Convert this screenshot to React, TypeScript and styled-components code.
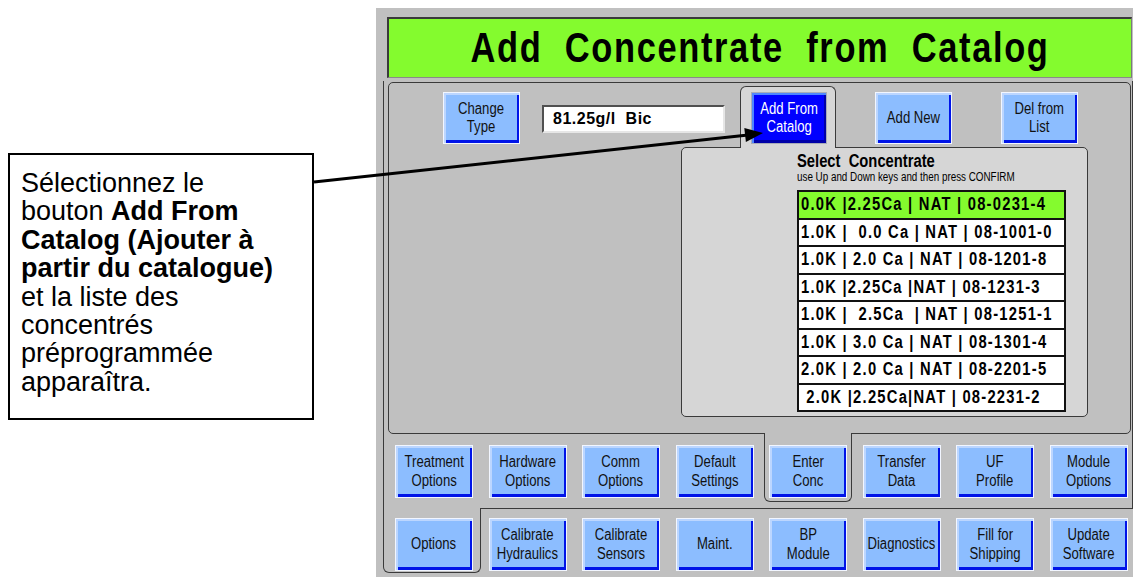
import React from "react";
import styled, { createGlobalStyle } from "styled-components";

// The panel uses a narrow sans; no narrow face is installed, so Arial metrics are squeezed.
const PANEL_FONT = `"Liberation Sans", Arial, sans-serif`;

const GlobalStyle = createGlobalStyle`
  html, body { margin: 0; padding: 0; background: #fff; }
  body { font-family: "Liberation Sans", Arial, sans-serif; }
`;

const ROW1 = [
  "Treatment\nOptions",
  "Hardware\nOptions",
  "Comm\nOptions",
  "Default\nSettings",
  "Enter\nConc",
  "Transfer\nData",
  "UF\nProfile",
  "Module\nOptions",
];
const ROW2 = [
  "Options",
  "Calibrate\nHydraulics",
  "Calibrate\nSensors",
  "Maint.",
  "BP\nModule",
  "Diagnostics",
  "Fill for\nShipping",
  "Update\nSoftware",
];

const CONCENTRATES = [
  "0.0K |2.25Ca | NAT | 08-0231-4",
  "1.0K |  0.0 Ca | NAT | 08-1001-0",
  "1.0K | 2.0 Ca | NAT | 08-1201-8",
  "1.0K |2.25Ca |NAT | 08-1231-3",
  "1.0K |  2.5Ca  | NAT | 08-1251-1",
  "1.0K | 3.0 Ca | NAT | 08-1301-4",
  "2.0K | 2.0 Ca | NAT | 08-2201-5",
  " 2.0K |2.25Ca|NAT | 08-2231-2",
];

const App: React.FC = () => {
  return (
    <>
      <GlobalStyle />
      <Page>
        <LeftColumn>
          <Callout>
            Sélectionnez le
            <br />
            bouton <b>Add From</b>
            <br />
            <b>Catalog (Ajouter à</b>
            <br />
            <b>partir du catalogue)</b>
            <br />
            et la liste des
            <br />
            concentrés
            <br />
            préprogrammée
            <br />
            apparaîtra.
          </Callout>
        </LeftColumn>

        <Screen>
          <Title>
            <Squeeze>{"Add  Concentrate  from  Catalog"}</Squeeze>
          </Title>
          <Frame>
            <UpperPanel>
              <TopRow>
                <TopButton $ml={0} $mt={9}>
                  <Squeeze>{"Change\nType"}</Squeeze>
                </TopButton>
                <ValueBox>{"81.25g/l  Bic"}</ValueBox>
                <CatalogTab>
                  <TabButton $active>
                    <Squeeze>{"Add From\nCatalog"}</Squeeze>
                  </TabButton>
                </CatalogTab>
                <TopButton $ml={39} $mt={9}>
                  <Squeeze>Add New</Squeeze>
                </TopButton>
                <TopButton $ml={49} $mt={9}>
                  <Squeeze>{"Del from\nList"}</Squeeze>
                </TopButton>
              </TopRow>
              <SelectPanel>
                <SelectTitle>
                  <Squeeze $origin="left">{"Select  Concentrate"}</Squeeze>
                </SelectTitle>
                <SelectHint>
                  <Squeeze $origin="left">use Up and Down keys and then press CONFIRM</Squeeze>
                </SelectHint>
                <ConcList>
                  {CONCENTRATES.map((c, i) => (
                    <ConcRow key={i} $selected={i === 0}>
                      <Squeeze $origin="left">{c}</Squeeze>
                    </ConcRow>
                  ))}
                </ConcList>
              </SelectPanel>
            </UpperPanel>
            <ButtonRow>
              {ROW1.map((label, i) =>
                i === 4 ? (
                  <EnterTab key={label}>
                    <Btn>
                      <Squeeze>{label}</Squeeze>
                    </Btn>
                  </EnterTab>
                ) : (
                  <Btn key={label}>
                    <Squeeze>{label}</Squeeze>
                  </Btn>
                )
              )}
            </ButtonRow>
          </Frame>
          <BottomRow>
            {ROW2.map((label, i) =>
              i === 0 ? (
                <OptionsTab key={label}>
                  <Btn>
                    <Squeeze>{label}</Squeeze>
                  </Btn>
                </OptionsTab>
              ) : (
                <Btn key={label}>
                  <Squeeze>{label}</Squeeze>
                </Btn>
              )
            )}
          </BottomRow>
        </Screen>

        <Arrow viewBox="0 0 1133 577" width="1133" height="577">
          <line x1="314" y1="182" x2="748" y2="135" stroke="#000" strokeWidth="3" />
          <polygon points="763,133 745.9,142 744.3,128" fill="#000" />
        </Arrow>
      </Page>
    </>
  );
};
export default App;

const Page = styled.div`
  position: relative;
  display: flex;
  align-items: flex-start;
  width: 1133px;
  height: 577px;
  overflow: hidden;
  background: #fff;
`;

const LeftColumn = styled.div`
  flex: none;
  width: 376px;
  box-sizing: border-box;
  padding: 153px 0 0 8px;
`;

const Callout = styled.div`
  width: 306px;
  height: 267px;
  box-sizing: border-box;
  border: 2px solid #000;
  padding: 14px 10px 0 11px;
  font-family: "Liberation Sans", Arial, sans-serif;
  font-size: 27px;
  line-height: 28.4px;
  color: #000;
  white-space: nowrap;
`;

const Squeeze = styled.span<{ $origin?: string }>`
  display: inline-block;
  transform: scaleX(0.82);
  transform-origin: ${({ $origin }) => $origin ?? "center"};
`;

const Screen = styled.div`
  flex: none;
  width: 757px;
  height: 569px;
  margin-top: 8px;
  box-sizing: border-box;
  padding: 9px 0 0 7px;
  background: #c0c0c0;
  display: flex;
  flex-direction: column;
`;

const Title = styled.div`
  flex: none;
  height: 61px;
  margin: 0 1px 0 4px;
  box-sizing: border-box;
  background: #84fb2e;
  border: 2px solid #3a3a3a;
  border-right: 1px solid #7a7a7a;
  border-bottom: 1px solid #8a8a8a;
  display: flex;
  align-items: center;
  justify-content: center;
  font-family: ${PANEL_FONT};
  font-weight: bold;
  font-size: 42px;
  letter-spacing: 2px;
  white-space: pre;
  color: #000;
`;

const Frame = styled.div`
  flex: none;
  height: 428px;
  margin-top: 3px;
  box-sizing: border-box;
  border: 1px solid #3a3a3a;
  border-top: none;
  display: flex;
  flex-direction: column;
`;

const UpperPanel = styled.div`
  flex: none;
  height: 352px;
  margin: 1px 1px 0 4px;
  box-sizing: border-box;
  border: 1px solid #3a3a3a;
  border-radius: 5px;
  display: flex;
  flex-direction: column;
`;

const TopRow = styled.div`
  flex: none;
  height: 64px;
  display: flex;
  align-items: flex-start;
  padding-left: 54px;
`;

const Btn = styled.button<{ $active?: boolean }>`
  display: flex;
  align-items: center;
  justify-content: center;
  box-sizing: border-box;
  width: 100%;
  height: 53px;
  margin: 0;
  padding: 0;
  font-family: ${PANEL_FONT};
  font-size: 16px;
  line-height: 18.5px;
  text-align: center;
  white-space: pre-line;
  color: ${({ $active }) => ($active ? "#fff" : "#111")};
  background: ${({ $active }) => ($active ? "#0000ff" : "#8cbdff")};
  border: 1px solid ${({ $active }) => ($active ? "#a8acb8" : "#f2f6ff")};
  box-shadow: ${({ $active }) =>
    $active
      ? "inset 2px 2px 0 #4f86ff, inset -2px -3px 0 #0000a8"
      : "inset 2px 2px 0 #bcd6ff, inset -2px -3px 0 #0014e8"};
  cursor: pointer;
`;

const TopButton = styled(Btn)<{ $ml: number; $mt: number }>`
  flex: none;
  width: 77px;
  height: 52px;
  margin: ${({ $mt, $ml }) => `${$mt}px 0 0 ${$ml}px`};
`;

const TabButton = styled(Btn)`
  width: 76px;
  height: 52px;
`;

const ValueBox = styled.div`
  flex: none;
  width: 183px;
  height: 28px;
  margin: 22px 0 0 22px;
  box-sizing: border-box;
  padding-left: 9px;
  background: #fff;
  border: 2px solid;
  border-color: #505050 #e6e6e6 #e6e6e6 #505050;
  font-family: ${PANEL_FONT};
  font-weight: bold;
  font-size: 16px;
  line-height: 24px;
  letter-spacing: 0.5px;
  white-space: pre;
  color: #000;
`;

const CatalogTab = styled.div`
  flex: none;
  position: relative;
  z-index: 1;
  width: 96px;
  height: 62px;
  margin: 3px 0 0 15px;
  box-sizing: border-box;
  padding: 5px 9px 0 10px;
  background: #d6d6d6;
  border: 1px solid #3a3a3a;
  border-bottom: none;
  border-radius: 6px 6px 0 0;
`;

const SelectPanel = styled.div`
  flex: none;
  width: 407px;
  height: 270px;
  margin-left: 292px;
  box-sizing: border-box;
  padding: 3px 0 0 115px;
  background: #d6d6d6;
  border: 1px solid #3a3a3a;
  border-radius: 5px;
`;

const SelectTitle = styled.div`
  font-family: ${PANEL_FONT};
  font-weight: bold;
  font-size: 18px;
  line-height: 20px;
  white-space: pre;
  color: #000;
`;

const SelectHint = styled.div`
  font-family: ${PANEL_FONT};
  font-size: 12px;
  line-height: 13px;
  white-space: nowrap;
  color: #000;
`;

const ConcList = styled.div`
  width: 269px;
  margin-top: 6px;
  box-sizing: border-box;
  border: 2px solid #111;
  background: #fff;
`;

const ConcRow = styled.div<{ $selected?: boolean }>`
  height: 25.5px;
  padding-left: 2px;
  font-family: ${PANEL_FONT};
  font-weight: bold;
  font-size: 18px;
  line-height: 25.5px;
  letter-spacing: 1.5px;
  white-space: pre;
  color: #000;
  background: ${({ $selected }) => ($selected ? "#84fb2e" : "#fff")};
  & + & {
    border-top: 2px solid #111;
  }
`;

const ButtonRow = styled.div`
  flex: 1;
  display: grid;
  grid-template-columns: repeat(8, 78px);
  grid-template-rows: 53px;
  column-gap: 15.5px;
  align-items: start;
  padding: 11px 0 0 11px;
`;

const EnterTab = styled.div`
  position: relative;
  z-index: 1;
  margin: -12px -5px 0;
  padding: 12px 4px 3px;
  background: #c0c0c0;
  border: 1px solid #3a3a3a;
  border-top: none;
  border-radius: 0 0 6px 6px;
`;

const BottomRow = styled.div`
  display: grid;
  grid-template-columns: repeat(8, 78px);
  grid-template-rows: 53px;
  column-gap: 15.5px;
  align-items: start;
  padding: 9px 0 0 12px;
`;

const OptionsTab = styled.div`
  position: relative;
  z-index: 1;
  margin: -10px -8px 0 -12px;
  padding: 10px 7px 1px 11px;
  background: #c0c0c0;
  border: 1px solid #3a3a3a;
  border-top: none;
  border-radius: 0 0 6px 6px;
`;

const Arrow = styled.svg`
  position: absolute;
  left: 0;
  top: 0;
  pointer-events: none;
  z-index: 5;
`;
